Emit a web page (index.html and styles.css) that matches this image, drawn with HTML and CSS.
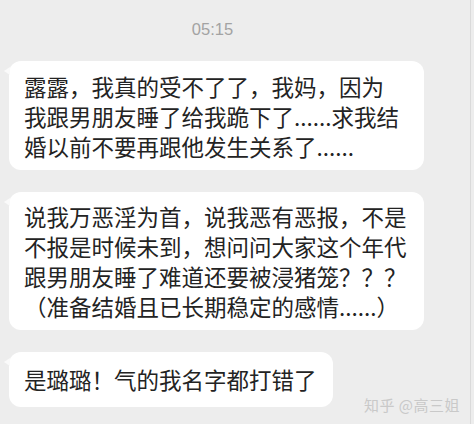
FILE: index.html
```html
<!DOCTYPE html>
<html lang="zh-CN">
<head>
    <meta charset="UTF-8">
    <meta name="viewport" content="width=device-width, initial-scale=1.0">
    <title>聊天记录</title>
    <link rel="stylesheet" href="styles.css">
</head>
<body>
    <div class="screen">
        <div class="time">05:15</div>

        <!-- 消息列表 -->
        <div class="bubble first">
            露露，我真的受不了了，我妈，因为<br>
            我跟男朋友睡了给我跪下了......求我结<br>
            婚以前不要再跟他发生关系了......
        </div>

        <div class="bubble second">
            说我万恶淫为首，说我恶有恶报，不是<br>
            不报是时候未到，想问问大家这个年代<br>
            跟男朋友睡了难道还要被浸猪笼？？？<br>
            （准备结婚且已长期稳定的感情......）
        </div>

        <div class="bubble short">是璐璐！气的我名字都打错了</div>

        <div class="watermark">知乎 @高三姐</div>
    </div>
</body>
</html>
```

FILE: styles.css
```css
body {
    margin: 0;
    padding: 0;
    background-color: #ededed;
    font-family: "Noto Sans CJK SC", "Noto Sans", sans-serif;
}

.screen {
    position: relative;
    width: 471px;
    height: 424px;
    border-right: 1px solid #dadada;
    background-color: #ededed;
    padding-top: 18px;
    box-sizing: border-box;
    overflow: hidden;
}

.time {
    text-align: center;
    font-family: "Liberation Sans", "Noto Sans", sans-serif;
    font-size: 16.5px;
    line-height: 22px;
    color: #a3a3a3;
    padding-right: 45px;
    margin-bottom: 21px;
}

.bubble {
    position: relative;
    background-color: #fff;
    border-radius: 12px;
    margin-left: 9px;
    width: 415px;
    box-sizing: border-box;
    padding: 9px 10px 9px 15px;
    font-size: 22.5px;
    line-height: 30px;
    color: #232323;
    white-space: nowrap;
    margin-bottom: 22px;
}

/* 小尾巴 */
.bubble::before {
    content: "";
    position: absolute;
    left: -5px;
    top: 6px;
    border-top: 4px solid transparent;
    border-bottom: 4px solid transparent;
    border-right: 6px solid #fafafa;
}

.first {
    padding-top: 10px;
    padding-bottom: 9px;
}

.short {
    width: 324px;
    padding-top: 12px;
    padding-bottom: 13px;
}

.watermark {
    position: absolute;
    right: 10px;
    bottom: 9px;
    font-size: 15px;
    line-height: 20px;
    color: #c9c9c9;
    letter-spacing: 0.5px;
}
```
